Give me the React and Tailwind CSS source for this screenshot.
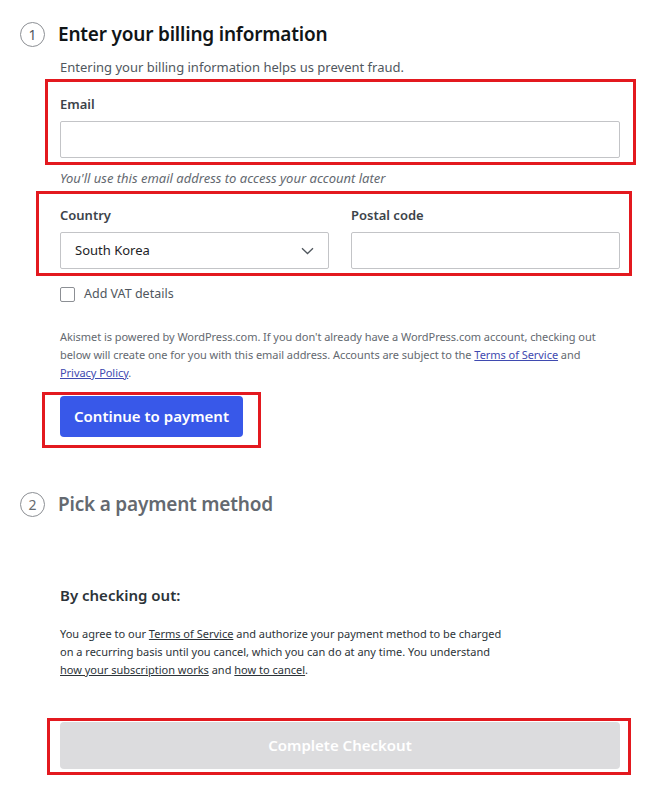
import React from "react";

function StepCircle({ n, muted }) {
  return (
    <div
      className={`flex h-[25px] w-[25px] shrink-0 items-center justify-center rounded-full border border-[#8c8f94] text-[14px] ${
        muted ? "text-[#646970]" : "text-[#50575e]"
      }`}
    >
      {n}
    </div>
  );
}

function Chevron() {
  return (
    <svg width="13" height="8" viewBox="0 0 13 8" fill="none">
      <path d="M1 1.2 L6.5 6.5 L12 1.2" stroke="#50575e" strokeWidth="1.3" />
    </svg>
  );
}

export default function App() {
  return (
    <div
      className="relative h-[789px] w-[657px] overflow-hidden bg-white pt-[20px] text-[#2c3338]"
      style={{ fontFamily: '"Noto Sans", "Open Sans", sans-serif' }}
    >
      {/* Step 1 header */}
      <div className="flex h-[28px] items-center pl-[20px]">
        <StepCircle n="1" />
        <h1 className="ml-[13px] text-[19px] font-semibold tracking-[-0.2px] text-[#101517]">
          Enter your billing information
        </h1>
      </div>

      <div className="ml-[60px] w-[560px]">
        <p className="mt-[9px] text-[13px] leading-[20px] text-[#50575e]">
          Entering your billing information helps us prevent fraud.
        </p>

        {/* Email box */}
        <div className="-ml-[15px] -mr-[16px] mt-[2px] border-[3px] border-[#e3191f] pb-[4px] pl-[12px] pr-[13px] pt-[12px]">
          <label className="block text-[13px] font-semibold leading-[20px] text-[#3c434a]">
            Email
          </label>
          <div className="mt-[7px] h-[37px] w-full rounded-[2px] border border-[#c3c4c7] bg-white" />
        </div>

        <p className="mt-[3px] text-[13px] italic leading-[20px] text-[#646970]">
          You'll use this email address to access your account later
        </p>

        {/* Country / postal box */}
        <div className="-ml-[24px] -mr-[12px] mt-[3px] border-[3px] border-[#e3191f] pb-[4px] pl-[21px] pr-[9px] pt-[11px]">
          <div className="grid grid-cols-2 gap-[22px]">
            <div>
              <label className="block text-[13px] font-semibold leading-[20px] text-[#3c434a]">
                Country
              </label>
              <div className="mt-[7px] flex h-[37px] items-center justify-between rounded-[2px] border border-[#c3c4c7] bg-white pl-[14px] pr-[14px]">
                <span className="text-[13px] text-[#1d2327]">South Korea</span>
                <Chevron />
              </div>
            </div>
            <div>
              <label className="block text-[13px] font-semibold leading-[20px] text-[#3c434a]">
                Postal code
              </label>
              <div className="mt-[7px] h-[37px] rounded-[2px] border border-[#c3c4c7] bg-white" />
            </div>
          </div>
        </div>

        {/* VAT checkbox */}
        <div className="mt-[10px] flex items-center">
          <div className="h-[15px] w-[15px] rounded-[2px] border border-[#8c8f94] bg-white" />
          <span className="ml-[9px] text-[12.5px] leading-[16px] text-[#50575e]">Add VAT details</span>
        </div>

        <p className="mt-[26px] text-[11px] leading-[18px] tracking-[-0.05px] text-[#646970]">
          Akismet is powered by WordPress.com. If you don't already have a WordPress.com account, checking out
          <br />
          below will create one for you with this email address. Accounts are subject to the{" "}
          <a className="text-[#3f4ab0] underline">Terms of Service</a> and
          <br />
          <a className="text-[#3f4ab0] underline">Privacy Policy</a>.
        </p>

        {/* Continue button box */}
        <div className="-ml-[18px] mt-[10px] w-[219px] border-[3px] border-[#e3191f] pb-[8px] pl-[15px] pt-[1px]">
          <button className="flex h-[41px] w-[183px] items-center justify-center rounded-[4px] bg-[#3858e9] text-[15px] font-semibold text-white">
            Continue to payment
          </button>
        </div>
      </div>

      {/* Step 2 header */}
      <div className="mt-[42px] flex h-[28px] items-center pl-[20px]">
        <StepCircle n="2" muted />
        <h2 className="ml-[13px] text-[19px] font-semibold tracking-[-0.2px] text-[#646970]">
          Pick a payment method
        </h2>
      </div>

      <div className="ml-[60px] w-[560px]">
        <h3 className="mt-[65px] text-[15px] font-semibold leading-[24px] text-[#2c3338]">
          By checking out:
        </h3>
        <p className="mt-[18px] text-[11px] leading-[18px] text-[#2c3338]">
          You agree to our <a className="underline">Terms of Service</a> and authorize your payment method to be charged
          <br />
          on a recurring basis until you cancel, which you can do at any time. You understand
          <br />
          <a className="underline">how your subscription works</a> and <a className="underline">how to cancel</a>.
        </p>

        {/* Complete checkout box */}
        <div className="-ml-[13px] -mr-[11px] mt-[39px] border-[3px] border-[#e3191f] pb-[3px] pl-[10px] pr-[8px] pt-[1px]">
          <button className="flex h-[47px] w-full items-center justify-center rounded-[4px] bg-[#dcdcde] text-[15px] font-semibold text-white">
            Complete Checkout
          </button>
        </div>
      </div>
    </div>
  );
}
